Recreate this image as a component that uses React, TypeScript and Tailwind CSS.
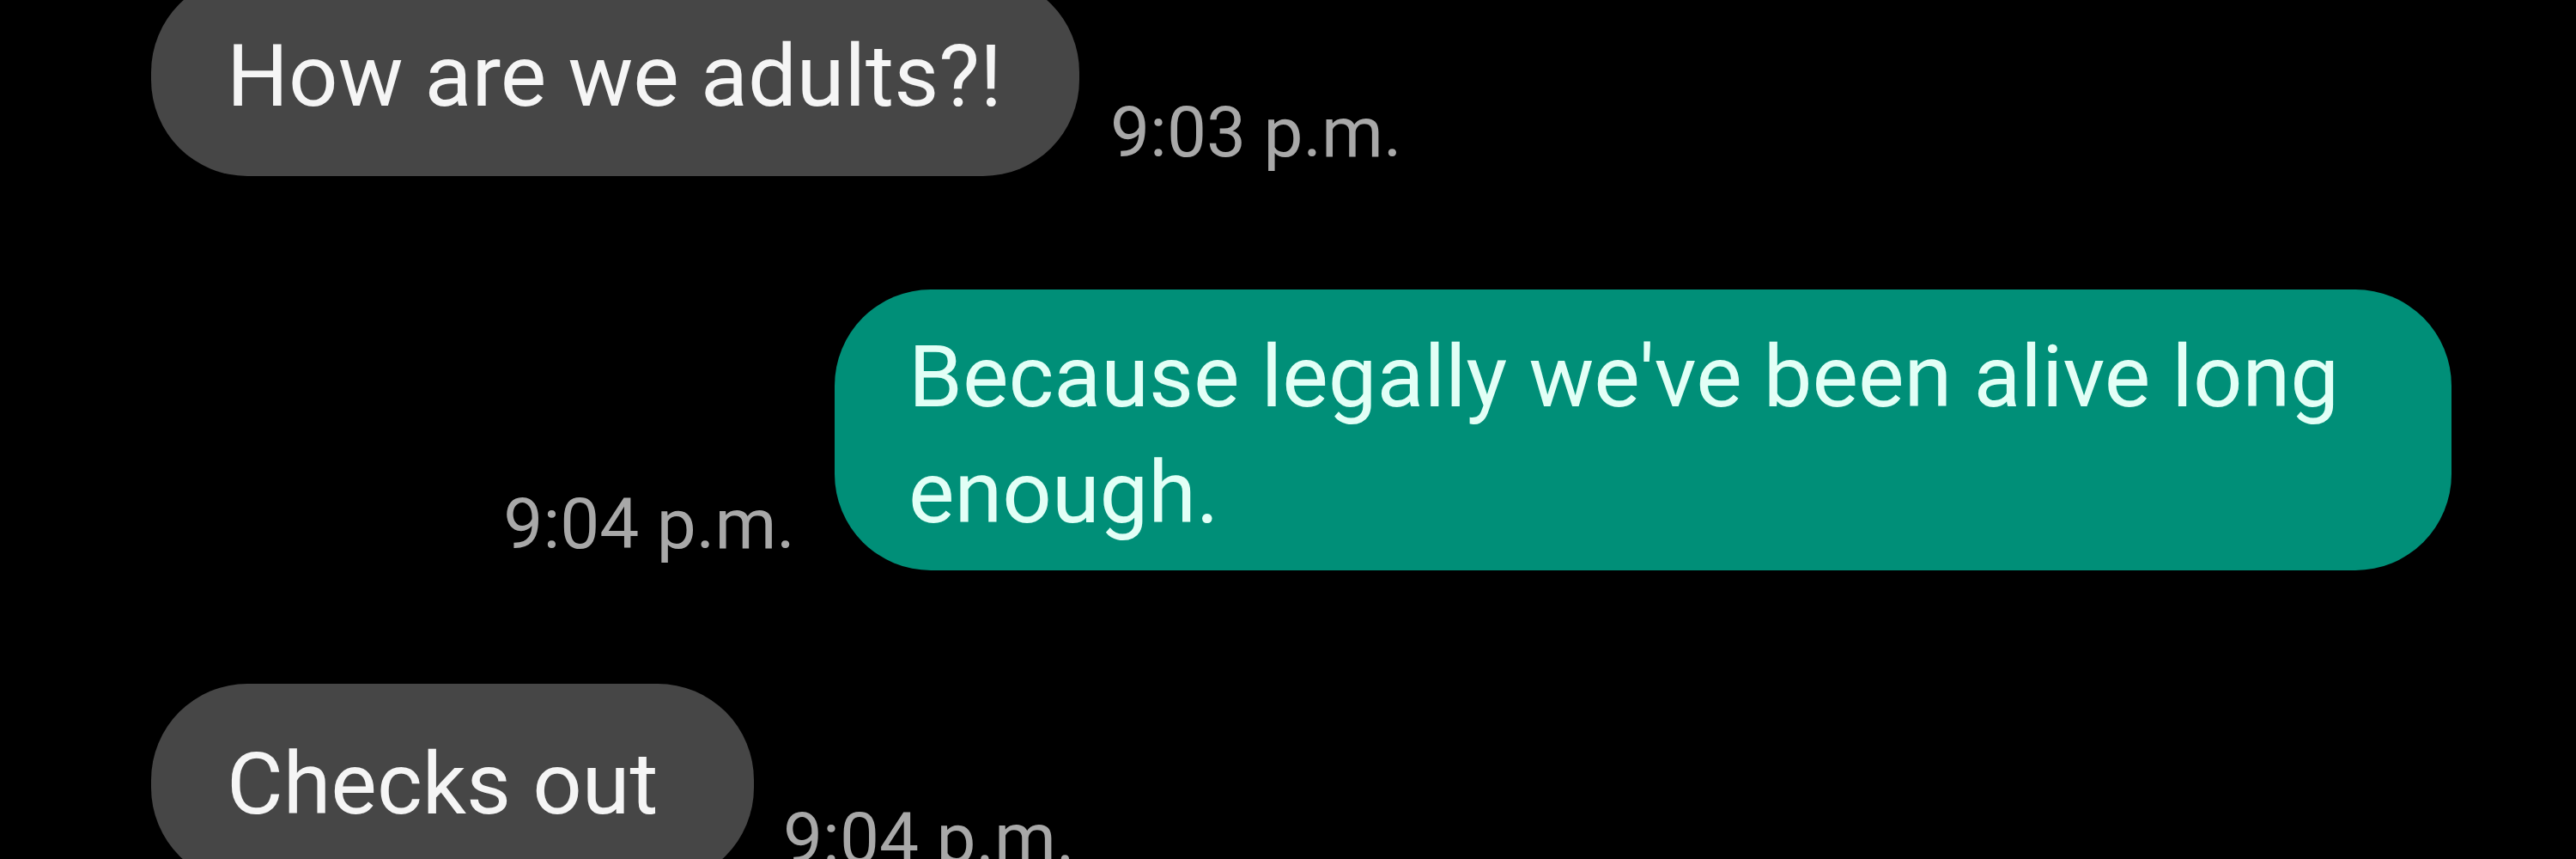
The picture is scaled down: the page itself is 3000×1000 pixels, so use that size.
import React from "react";

const font = { fontFamily: "Roboto, 'Noto Sans', sans-serif" };

export default function App() {
  return (
    <div className="w-[3000px] h-[1000px] overflow-hidden bg-black" style={font}>
      <div className="flex flex-col gap-[132px] mt-[-28px]">
        <div className="flex items-end pl-[176px] gap-[36px]">
          <div className="h-[233px] w-[1081px] rounded-[112px] bg-[#464646] pl-[88px] flex items-center text-[101px] leading-[135px] text-[#f5f5f5] whitespace-nowrap">
            How are we adults?!
          </div>
          <div className="text-[82px] leading-none text-[#a8a8a8] mb-[10px] whitespace-nowrap">9:03 p.m.</div>
        </div>

        <div className="flex items-end justify-end pr-[145px] gap-[46px]">
          <div className="text-[82px] leading-none text-[#a8a8a8] mb-[13px] whitespace-nowrap">9:04 p.m.</div>
          <div className="w-[1883px] h-[327px] rounded-[112px] bg-[#008f78] pl-[86px] pt-[34px] pb-[23px] text-[101px] leading-[135px] text-[#e2fff6] whitespace-nowrap">
            Because legally we've been alive long
            <br />
            enough.
          </div>
        </div>

        <div className="flex items-end pl-[176px] gap-[34px]">
          <div className="h-[233px] w-[702px] rounded-[112px] bg-[#464646] pl-[88px] flex items-center text-[101px] leading-[135px] text-[#f5f5f5] whitespace-nowrap">
            Checks out
          </div>
          <div className="text-[82px] leading-none text-[#a8a8a8] mb-[12px] whitespace-nowrap">9:04 p.m.</div>
        </div>
      </div>
    </div>
  );
}
